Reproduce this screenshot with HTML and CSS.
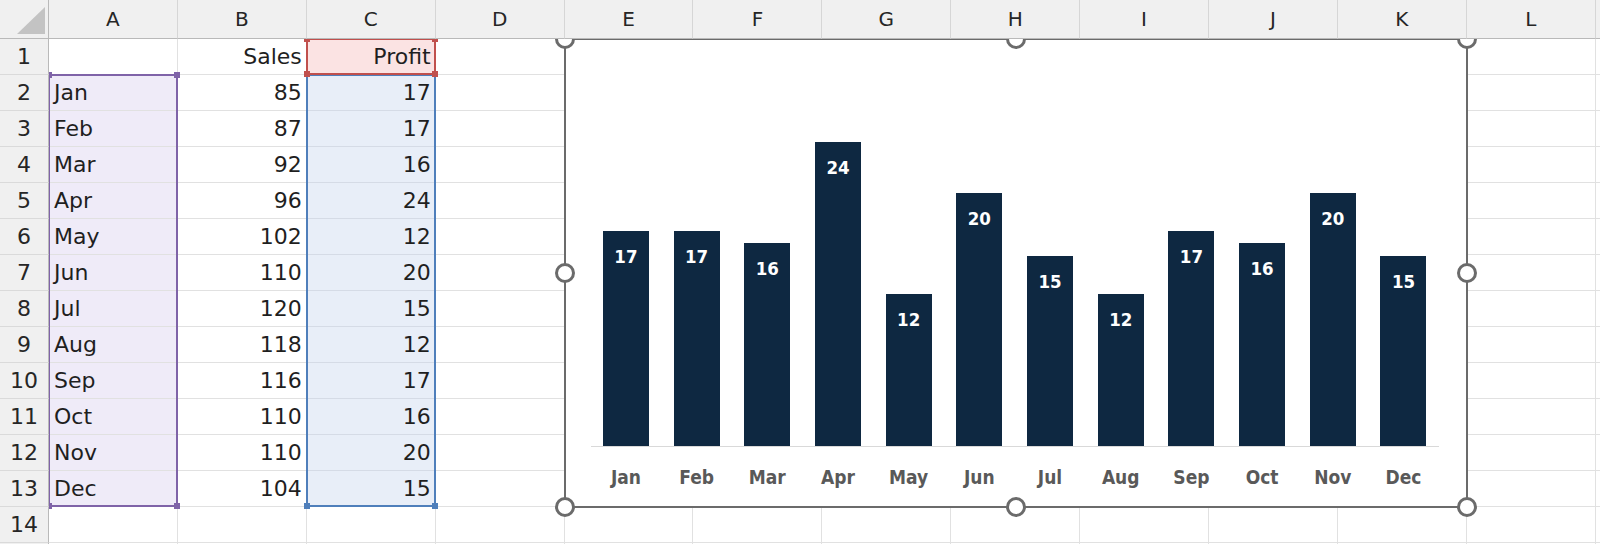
FILE: index.html
```html
<!DOCTYPE html>
<html>
<head>
<meta charset="utf-8">
<link rel="stylesheet" href="styles.css">
</head>
<body>
<div class="sheet">
  <div class="grid cells">
    <div class="ch corner"><svg width="49" height="38" viewBox="0 0 49 38"><polygon points="17,34 45,34 45,7" fill="#c3c3c3"/></svg></div>
    <div class="ch">A</div><div class="ch">B</div><div class="ch">C</div><div class="ch">D</div><div class="ch">E</div><div class="ch">F</div><div class="ch">G</div><div class="ch">H</div><div class="ch">I</div><div class="ch">J</div><div class="ch">K</div><div class="ch">L</div><div class="ch"></div>

    <div class="rh">1</div><div class="c"></div><div class="c r">Sales</div><div class="c r pink">Profit</div><div class="c"></div><div class="c"></div><div class="c"></div><div class="c"></div><div class="c"></div><div class="c"></div><div class="c"></div><div class="c"></div><div class="c"></div><div class="c"></div>
    <div class="rh">2</div><div class="c lav">Jan</div><div class="c r">85</div><div class="c r blue">17</div><div class="c"></div><div class="c"></div><div class="c"></div><div class="c"></div><div class="c"></div><div class="c"></div><div class="c"></div><div class="c"></div><div class="c"></div><div class="c"></div>
    <div class="rh">3</div><div class="c lav">Feb</div><div class="c r">87</div><div class="c r blue">17</div><div class="c"></div><div class="c"></div><div class="c"></div><div class="c"></div><div class="c"></div><div class="c"></div><div class="c"></div><div class="c"></div><div class="c"></div><div class="c"></div>
    <div class="rh">4</div><div class="c lav">Mar</div><div class="c r">92</div><div class="c r blue">16</div><div class="c"></div><div class="c"></div><div class="c"></div><div class="c"></div><div class="c"></div><div class="c"></div><div class="c"></div><div class="c"></div><div class="c"></div><div class="c"></div>
    <div class="rh">5</div><div class="c lav">Apr</div><div class="c r">96</div><div class="c r blue">24</div><div class="c"></div><div class="c"></div><div class="c"></div><div class="c"></div><div class="c"></div><div class="c"></div><div class="c"></div><div class="c"></div><div class="c"></div><div class="c"></div>
    <div class="rh">6</div><div class="c lav">May</div><div class="c r">102</div><div class="c r blue">12</div><div class="c"></div><div class="c"></div><div class="c"></div><div class="c"></div><div class="c"></div><div class="c"></div><div class="c"></div><div class="c"></div><div class="c"></div><div class="c"></div>
    <div class="rh">7</div><div class="c lav">Jun</div><div class="c r">110</div><div class="c r blue">20</div><div class="c"></div><div class="c"></div><div class="c"></div><div class="c"></div><div class="c"></div><div class="c"></div><div class="c"></div><div class="c"></div><div class="c"></div><div class="c"></div>
    <div class="rh">8</div><div class="c lav">Jul</div><div class="c r">120</div><div class="c r blue">15</div><div class="c"></div><div class="c"></div><div class="c"></div><div class="c"></div><div class="c"></div><div class="c"></div><div class="c"></div><div class="c"></div><div class="c"></div><div class="c"></div>
    <div class="rh">9</div><div class="c lav">Aug</div><div class="c r">118</div><div class="c r blue">12</div><div class="c"></div><div class="c"></div><div class="c"></div><div class="c"></div><div class="c"></div><div class="c"></div><div class="c"></div><div class="c"></div><div class="c"></div><div class="c"></div>
    <div class="rh">10</div><div class="c lav">Sep</div><div class="c r">116</div><div class="c r blue">17</div><div class="c"></div><div class="c"></div><div class="c"></div><div class="c"></div><div class="c"></div><div class="c"></div><div class="c"></div><div class="c"></div><div class="c"></div><div class="c"></div>
    <div class="rh">11</div><div class="c lav">Oct</div><div class="c r">110</div><div class="c r blue">16</div><div class="c"></div><div class="c"></div><div class="c"></div><div class="c"></div><div class="c"></div><div class="c"></div><div class="c"></div><div class="c"></div><div class="c"></div><div class="c"></div>
    <div class="rh">12</div><div class="c lav">Nov</div><div class="c r">110</div><div class="c r blue">20</div><div class="c"></div><div class="c"></div><div class="c"></div><div class="c"></div><div class="c"></div><div class="c"></div><div class="c"></div><div class="c"></div><div class="c"></div><div class="c"></div>
    <div class="rh">13</div><div class="c lav">Dec</div><div class="c r">104</div><div class="c r blue">15</div><div class="c"></div><div class="c"></div><div class="c"></div><div class="c"></div><div class="c"></div><div class="c"></div><div class="c"></div><div class="c"></div><div class="c"></div><div class="c"></div>
    <div class="rh">14</div><div class="c"></div><div class="c"></div><div class="c"></div><div class="c"></div><div class="c"></div><div class="c"></div><div class="c"></div><div class="c"></div><div class="c"></div><div class="c"></div><div class="c"></div><div class="c"></div><div class="c"></div>
    <div class="rh"></div><div class="c"></div><div class="c"></div><div class="c"></div><div class="c"></div><div class="c"></div><div class="c"></div><div class="c"></div><div class="c"></div><div class="c"></div><div class="c"></div><div class="c"></div><div class="c"></div><div class="c"></div>
  </div>

  <div class="grid overlay">
    <div class="sel sel-a"><i class="sq tl"></i><i class="sq tr"></i><i class="sq bl"></i><i class="sq br"></i></div>
    <div class="sel sel-c"><i class="sq bl"></i><i class="sq br"></i></div>
    <div class="sel sel-c1"><i class="sq tl"></i><i class="sq tr"></i><i class="sq bl"></i><i class="sq br"></i></div>

    <div class="chart">
      <div class="bars">
        <div class="slot"><div class="bar" style="height:215px"><span>17</span></div></div>
        <div class="slot"><div class="bar" style="height:215px"><span>17</span></div></div>
        <div class="slot"><div class="bar" style="height:202.4px"><span>16</span></div></div>
        <div class="slot"><div class="bar" style="height:303.6px"><span>24</span></div></div>
        <div class="slot"><div class="bar" style="height:151.8px"><span>12</span></div></div>
        <div class="slot"><div class="bar" style="height:253px"><span>20</span></div></div>
        <div class="slot"><div class="bar" style="height:189.8px"><span>15</span></div></div>
        <div class="slot"><div class="bar" style="height:151.8px"><span>12</span></div></div>
        <div class="slot"><div class="bar" style="height:215px"><span>17</span></div></div>
        <div class="slot"><div class="bar" style="height:202.4px"><span>16</span></div></div>
        <div class="slot"><div class="bar" style="height:253px"><span>20</span></div></div>
        <div class="slot"><div class="bar" style="height:189.8px"><span>15</span></div></div>
      </div>
      <div class="axis">
        <div>Jan</div><div>Feb</div><div>Mar</div><div>Apr</div><div>May</div><div>Jun</div><div>Jul</div><div>Aug</div><div>Sep</div><div>Oct</div><div>Nov</div><div>Dec</div>
      </div>
      <i class="hd h-tl"></i><i class="hd h-tc"></i><i class="hd h-tr"></i>
      <i class="hd h-ml"></i><i class="hd h-mr"></i>
      <i class="hd h-bl"></i><i class="hd h-bc"></i><i class="hd h-br"></i>
    </div>
  </div>
</div>
</body>
</html>
```

FILE: styles.css
```css
html, body {
  margin: 0;
  padding: 0;
  width: 1600px;
  height: 544px;
  overflow: hidden;
  background: #ffffff;
}

.sheet {
  display: grid;
  width: 1600px;
  height: 544px;
  overflow: hidden;
  font-family: "DejaVu Sans", "Liberation Sans", sans-serif;
  color: #1f1f1f;
}

.grid {
  grid-area: 1 / 1;
  display: grid;
  grid-template-columns: 49px repeat(12, 128.9px) 1fr;
  grid-template-rows: 38.5px repeat(15, 36px);
}

.ch {
  position: relative;
  z-index: 5;
  background: #f0f0f0;
  border-right: 1px solid #d6d6d6;
  border-bottom: 1px solid #b9b9b9;
  box-sizing: border-box;
  font-size: 20px;
  line-height: 38px;
  text-align: center;
  color: #262626;
}

.corner {
  border-right: 1px solid #b9b9b9;
}

.corner svg {
  display: block;
}

.rh {
  position: relative;
  z-index: 5;
  background: #f0f0f0;
  border-right: 1px solid #b9b9b9;
  border-bottom: 1px solid #dadada;
  box-sizing: border-box;
  font-size: 22px;
  line-height: 36px;
  text-align: center;
  color: #262626;
}

.c {
  border-right: 1px solid #e1e1e1;
  border-bottom: 1px solid #e1e1e1;
  box-sizing: border-box;
  font-size: 22px;
  line-height: 36px;
  padding: 0 5px;
  white-space: nowrap;
  overflow: hidden;
}

.c.r {
  text-align: right;
  padding-right: 4px;
}

.lav { background: #efebf8; }
.blue { background: #e8eef8; border-bottom-color: #d5dbe6; }
.pink { background: #fbe3e3; }

.overlay {
  pointer-events: none;
}

.sel {
  position: relative;
  box-sizing: border-box;
  border: 2px solid;
  margin: -1px 0 0 -1px;
}

.sel-a {
  grid-column: 2;
  grid-row: 3 / 15;
  border-color: #7f63a8;
}

.sel-a .sq { background: #7f63a8; }

.sel-c {
  grid-column: 4;
  grid-row: 3 / 15;
  border-color: #4f7fbb;
}

.sel-c .sq { background: #4f7fbb; }

.sel-c1 {
  grid-column: 4;
  grid-row: 2;
  border-color: #c0504d;
}

.sel-c1 .sq { background: #c0504d; }

.sq {
  position: absolute;
  width: 6px;
  height: 6px;
}

.sq.tl { left: -4px; top: -4px; }
.sq.tr { right: -4px; top: -4px; }
.sq.bl { left: -4px; bottom: -4px; }
.sq.br { right: -4px; bottom: -4px; }

.chart {
  position: relative;
  grid-column: 6 / 13;
  grid-row: 2 / 15;
  margin: -1px -1px -1px -1px;
  background: #ffffff;
  border: 2px solid #6b6b6b;
  display: flex;
  flex-direction: column;
}

.bars {
  display: flex;
  align-items: flex-end;
  height: 407px;
  margin: 0 27px 0 25px;
  border-bottom: 1px solid #d9d9d9;
  box-sizing: border-box;
}

.slot {
  flex: 1;
  display: flex;
  justify-content: center;
  align-items: flex-end;
}

.bar {
  width: 46px;
  background: #0e2841;
  text-align: center;
}

.bar span {
  display: block;
  padding-top: 16px;
  font-family: "DejaVu Sans Condensed", "DejaVu Sans", sans-serif;
  font-stretch: condensed;
  font-weight: bold;
  font-size: 18.5px;
  line-height: 20px;
  color: #ffffff;
}

.axis {
  display: flex;
  margin: 0 27px 0 25px;
  padding-top: 19px;
}

.axis div {
  flex: 1;
  text-align: center;
  font-family: "DejaVu Sans Condensed", "DejaVu Sans", sans-serif;
  font-stretch: condensed;
  font-weight: bold;
  font-size: 19px;
  line-height: 22px;
  color: #595959;
}

.hd {
  position: absolute;
  width: 20px;
  height: 20px;
  box-sizing: border-box;
  border: 3px solid #6b6b6b;
  border-radius: 50%;
  background: #ffffff;
}

.h-tl { left: -11px; top: -11px; }
.h-tc { left: calc(50% - 10px); top: -11px; }
.h-tr { right: -11px; top: -11px; }
.h-ml { left: -11px; top: calc(50% - 10px); }
.h-mr { right: -11px; top: calc(50% - 10px); }
.h-bl { left: -11px; bottom: -11px; }
.h-bc { left: calc(50% - 10px); bottom: -11px; }
.h-br { right: -11px; bottom: -11px; }
```
